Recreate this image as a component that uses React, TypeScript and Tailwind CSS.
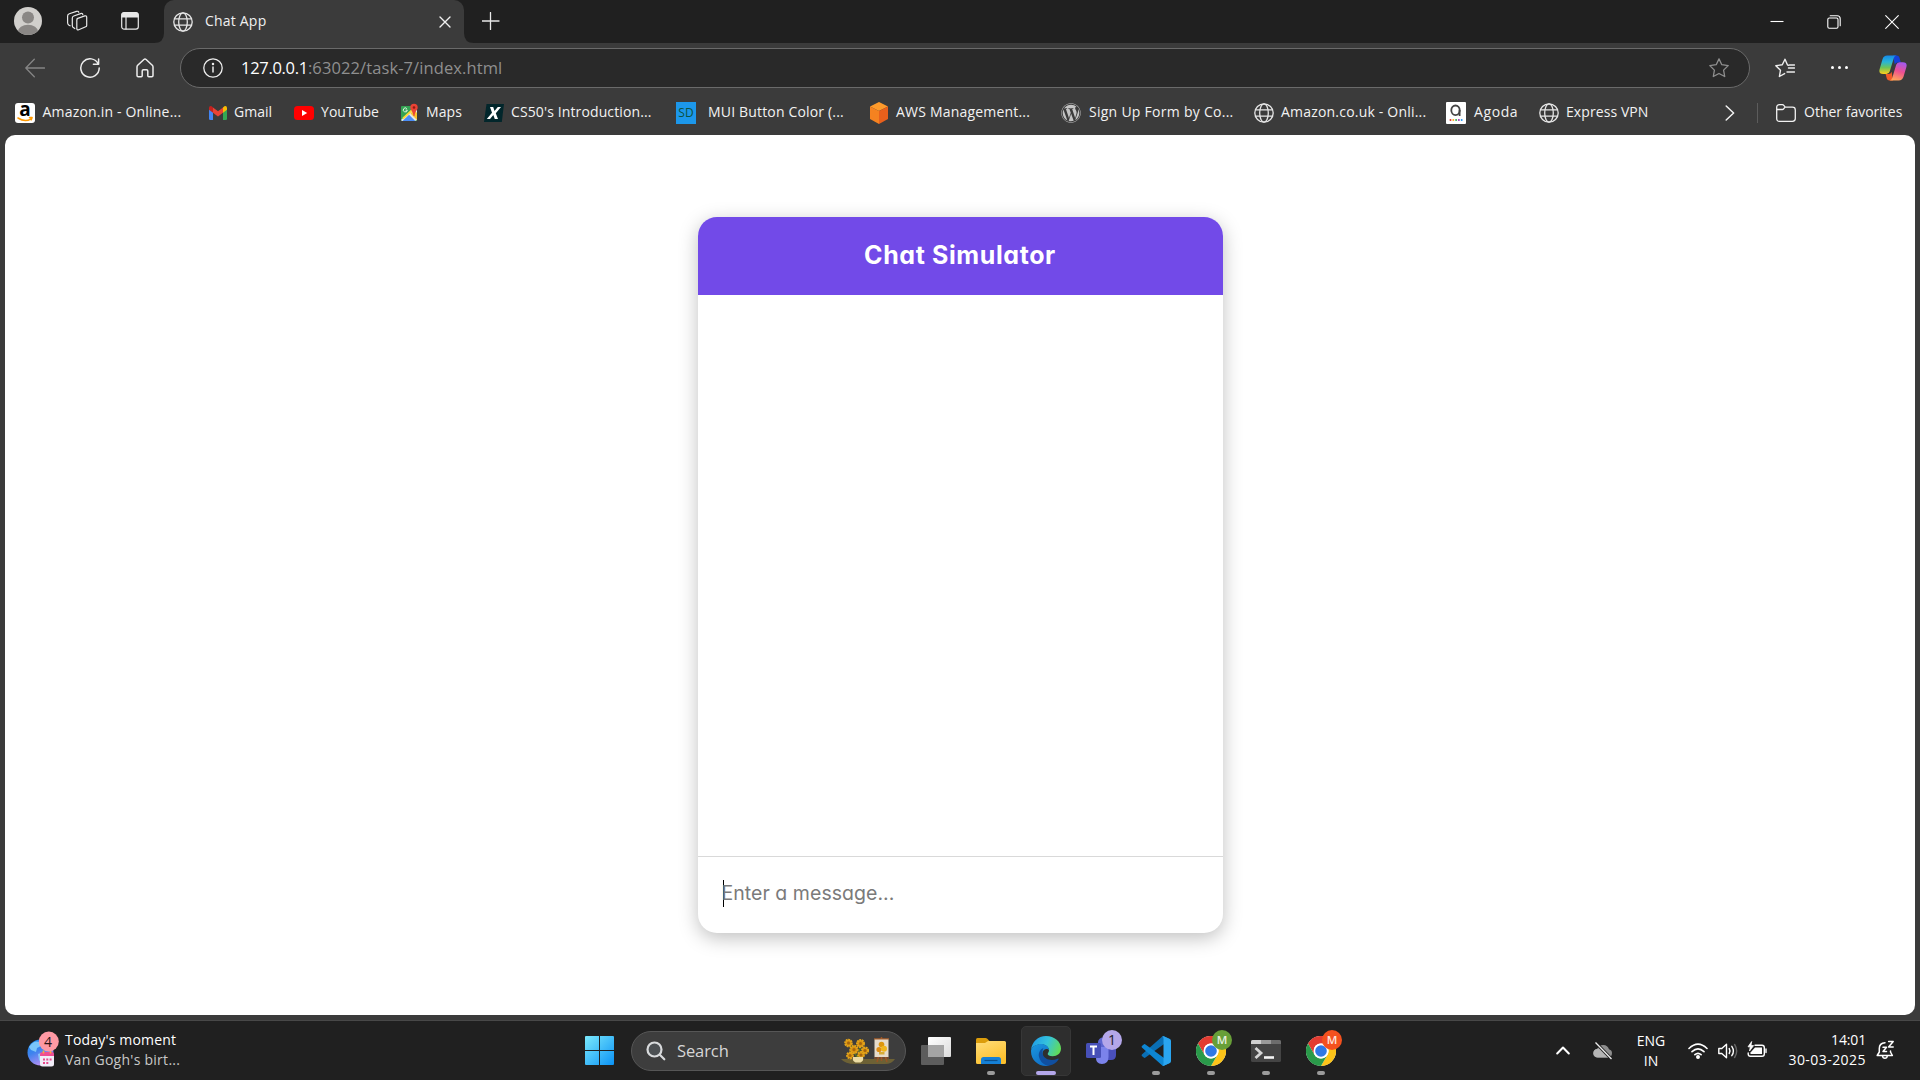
import type { ReactNode, SVGProps } from "react";
import { FaWordpress } from "react-icons/fa";

function Svg({ children, ...props }: SVGProps<SVGSVGElement>) {
  return (
    <svg fill="none" stroke="currentColor" strokeLinecap="round" strokeLinejoin="round" strokeWidth={1.3} {...props}>
      {children}
    </svg>
  );
}

function Globe() {
  return (
    <Svg viewBox="0 0 20 20" className="size-5 text-[#e6e6e6]">
      <circle cx="10" cy="10" r="9.2" />
      <ellipse cx="10" cy="10" rx="4.3" ry="9.2" />
      <path d="M1.5 6.8h17M1.5 13.2h17" />
    </Svg>
  );
}

/* ---------- tab strip ---------- */

function TabStrip() {
  return (
    <div className="flex h-[43px] bg-[#202020] text-[#e8e8e8]">
      <div className="flex w-[164px] items-center pb-px pl-[14px]">
        <svg viewBox="0 0 28 28" className="size-7">
          <clipPath id="avatar"><circle cx="14" cy="14" r="14" /></clipPath>
          <g clipPath="url(#avatar)">
            <rect width="28" height="28" fill="#d1cfcc" />
            <circle cx="14" cy="10.4" r="6" fill="#8a8785" />
            <ellipse cx="14" cy="24.5" rx="10" ry="6.8" fill="#8a8785" />
          </g>
        </svg>
        <Svg viewBox="0 0 22 22" className="ml-[24px] size-[22px]" strokeWidth={1.2}>
          <path d="M11.1 8.6 18.8 5.9q1.9-.5 1.9 1.3v8.2q0 1-1 1.4l-7 2.9q-1.9.7-1.9-1.2v-8.4q0-1.1.9-1.5Z" />
          <path d="M16.8 4.6q-.3-1.6-2.2-1L7.8 6q-1.5.5-1.5 2v7.5q0 1.300 1 2.100l1.500.9" />
          <path d="M12.8 2.300q-.5-1.500-2.300-.9L3.300 3.800q-1.700.6-1.700 2.200V12.700q0 1.400 1.100 2.200l1.400.9" />
        </Svg>
        <Svg viewBox="0 0 18 18" className="ml-[33px] size-[18px]" strokeWidth={1.2}>
          <rect x=".7" y=".9" width="16.6" height="16.2" rx="2.4" />
          <path d="M1 5V3q0-2.300 2.300-2.300h11.400Q17 .7 17 3v2Z" fill="currentColor" />
          <path d="M5 5v12" />
        </Svg>
      </div>
      <div className="relative flex w-[300px] items-center rounded-t-[10px] bg-[#3b3b3b] pl-[9px] text-[#f0f0f0]">
        <svg viewBox="0 0 10 10" className="absolute bottom-0 -left-[10px] size-[10px]"><path d="M10 0v10H0Q10 10 10 0Z" fill="#3b3b3b" /></svg>
        <svg viewBox="0 0 10 10" className="absolute -right-[10px] bottom-0 size-[10px]"><path d="M0 0v10h10Q0 10 0 0Z" fill="#3b3b3b" /></svg>
        <Globe />
        <span className="ml-3 flex-1 pb-[2px] text-[14px] leading-5 tracking-[0.2px]">Chat App</span>
        <Svg viewBox="0 0 10 10" className="mr-[14px] size-[10px] overflow-visible" strokeWidth={1.4}><path d="M0 0l10 10M10 0 0 10" /></Svg>
      </div>
      <Svg viewBox="0 0 18 18" className="mt-[12px] ml-[18px] size-[18px]" strokeWidth={1.3}><path d="M8.500.5v17M0 9h17" /></Svg>
      <div className="ml-auto flex items-center pr-[21px] text-white">
        <Svg viewBox="0 0 14 14" className="mr-[43px] size-[14px]" strokeWidth={1.1} strokeLinecap="butt"><path d="M.5 6.500h13" /></Svg>
        <Svg viewBox="0 0 14 14" className="mr-[44px] size-[14px]" strokeWidth={1.1}>
          <rect x=".8" y="3" width="10.2" height="10.2" rx="1.500" />
          <path d="M3.200.8h7q3 0 3 3v7" />
        </Svg>
        <Svg viewBox="0 0 14 14" className="size-[14px]" strokeWidth={1.1}><path d="M.7.700l12.600 12.600M13.300.7.7 13.300" /></Svg>
      </div>
    </div>
  );
}

/* ---------- toolbar ---------- */

const STAR = "M10 .9l2.800 5.800 6.400.9-4.600 4.500 1.100 6.400L10 15.500l-5.700 3 1.100-6.400L.8 7.600l6.400-.9Z";

function Copilot() {
  return (
    <svg viewBox="0 0 28 26" className="h-[26px] w-7">
      <defs>
        <linearGradient id="cpA" x1=".3" y1="0" x2=".3" y2="1">
          <stop offset="0" stopColor="#1589e8" /><stop offset=".35" stopColor="#28b5d8" />
          <stop offset=".65" stopColor="#6cc45a" /><stop offset="1" stopColor="#ffcf1a" />
        </linearGradient>
        <linearGradient id="cpB" x1=".7" y1="0" x2=".4" y2="1">
          <stop offset="0" stopColor="#a259f0" /><stop offset=".5" stopColor="#ee5090" /><stop offset="1" stopColor="#ffa45a" />
        </linearGradient>
      </defs>
      <path d="M14 .5h3.800q2 0 2.600 2l1.400 5h-3q-2.300 0-3 2.300Z" fill="#1440d8" />
      <path d="M14 25.500h-3.600q-2 0-2.600-2L6.600 19h3q2.300 0 3-2.300Z" fill="#f25a28" />
      <path d="M8.300.5h9.200q-2 .3-2.700 2.600l-4 13.200q-.8 2.700-3.400 2.700H4.100Q-.6 19 .6 14.300L3.500 4.200Q4.600.5 8.300.5Z" fill="url(#cpA)" />
      <path d="M19.700 25.500h-9.200q2-.3 2.700-2.600l4-13.100q.8-2.600 3.400-2.600h3.300q4.700 0 3.500 4.700l-2.900 9.900q-1.100 3.700-4.800 3.700Z" fill="url(#cpB)" />
    </svg>
  );
}

function Toolbar() {
  return (
    <div className="flex h-[49px] items-center text-[#ededed]">
      <div className="flex w-[180px] items-center pl-[25px]">
        <Svg viewBox="0 0 20 20" className="size-5 text-[#858585]"><path d="M19.500 10H.8M9.300 1.300.8 10l8.500 8.700" /></Svg>
        <Svg viewBox="0 0 20 20" className="ml-[35px] size-5" strokeWidth={1.5}>
          <path d="M18.300 6A9.200 9.200 0 1 0 19.200 10M18.600 1v5.200h-5.200" />
        </Svg>
        <Svg viewBox="0 0 18 20" className="ml-[36px] h-5 w-[18px]" strokeWidth={1.5}>
          <path d="M1 8.900Q1 8 1.700 7.300L7.900 1.500Q9 .6 10.100 1.500l6.200 5.800q.7.700.7 1.600v8.700q0 1.200-1.200 1.200h-3q-1 0-1-1V13q0-1.200-1.200-1.200H7.400Q6.200 11.800 6.200 13v4.800q0 1-1 1h-3Q1 18.800 1 17.600Z" />
        </Svg>
      </div>
      <div className="flex h-10 w-[1570px] items-center rounded-full border border-[#6a6a6a] bg-[#292929] pr-5 pl-[22px]">
        <Svg viewBox="0 0 20 20" className="size-5">
          <circle cx="10" cy="10" r="9.200" />
          <path d="M10 9v5" strokeWidth={1.5} /><circle cx="10" cy="6" r=".6" fill="currentColor" />
        </Svg>
        <div className="ml-[18px] flex-1 text-[16.5px] leading-6">
          <span className="tracking-[-0.3px] text-white">127.0.0.1</span>
          <span className="tracking-[0.1px] text-[#8f8f8f]">:63022/task-7/index.html</span>
        </div>
        <Svg viewBox="0 0 20 20" className="size-5 text-[#8f8f8f]"><path d={STAR} /></Svg>
      </div>
      <Svg viewBox="0 0 20 20" className="ml-[25px] size-5" strokeWidth={1.4}>
        <path d="M13.800 7.200l-1.300-.2L10 1.200 7.300 6.800l-6.500.9 4.700 4.500-1.100 6.300 5.200-2.900M13.500 10h6M12 14h7.500M14.500 7h5" />
      </Svg>
      <div className="ml-[36px] flex w-[17px] justify-between">
        <i className="size-[3px] rounded-full bg-white" /><i className="size-[3px] rounded-full bg-white" /><i className="size-[3px] rounded-full bg-white" />
      </div>
      <div className="ml-[31px]"><Copilot /></div>
    </div>
  );
}

/* ---------- bookmarks ---------- */

function Bookmark({ icon, label, className }: { icon: ReactNode; label: string; className: string }) {
  return (
    <div className={"flex shrink-0 items-center text-[14px] leading-5 whitespace-nowrap " + className}>
      <div className="flex size-5 shrink-0 items-center justify-center">{icon}</div>
      <span className="pb-[2px]">{label}</span>
    </div>
  );
}

const amazon = (
  <div className="relative flex size-5 justify-center rounded-[3px] bg-white">
    <span className="-mt-[4px] font-['Open_Sans'] text-[19px] leading-5 font-bold text-black">a</span>
    <Svg viewBox="0 0 20 6" className="absolute bottom-[1px] left-0 h-[6px] w-5 text-[#ff9900]" strokeWidth={1.5}><path d="M3 2q7 4.600 13 .8M14.500 1.600l2.600-.2-.8 2.400" /></Svg>
  </div>
);
const gmail = (
  <svg viewBox="0 0 18 14" className="h-[14px] w-[18px]">
    <path d="M0 2.500 4 5.500V14H1.300Q0 14 0 12.700Z" fill="#4285f4" />
    <path d="M18 2.500 14 5.500V14h2.700q1.300 0 1.300-1.300Z" fill="#34a853" />
    <path d="M4 1.500l5 3.800 5-3.800v5.200l-5 3.800-5-3.800Z" fill="#ea4335" />
    <path d="M0 2Q0 .2 1.700.1 2.500 0 3.200.7L4 1.400v5.300L0 3.700Z" fill="#c5221f" />
    <path d="M18 2q0-1.800-1.700-1.900-.8-.1-1.500.6l-.8.700v5.300l4-3Z" fill="#fbbc04" />
  </svg>
);
const youtube = (
  <svg viewBox="0 0 20 14" className="h-[14px] w-5">
    <rect width="20" height="14" rx="3.5" fill="#f00" /><path d="M8 4l5.200 3L8 10Z" fill="#fff" />
  </svg>
);
const maps = (
  <svg viewBox="0 0 20 20" className="size-5">
    <rect x="1" y="3" width="16" height="15" rx="1" fill="#34a353" />
    <path d="M1 17 16 3l1 1v13L15 18H2Z" fill="#e6e6e6" />
    <path d="M2.500 18 9 11.800l6.300 6.200Z" fill="#4a8cf5" />
    <path d="M10.500 10.500 17 17V10l-3-3.200Z" fill="#fbc02d" />
    <path d="M3 15.500 15.500 4" stroke="#fdd835" strokeWidth="1.8" />
    <path d="M6.800 5.600a2 2 0 1 0 .5 1.500H5.600" stroke="#e8f5e9" fill="none" />
    <path d="M14 .8a3.700 3.700 0 0 1 3.700 3.700c0 2.700-2.600 3.300-3.200 8.400h-1c-.6-5.100-3.200-5.700-3.200-8.400A3.700 3.700 0 0 1 14 .8Z" fill="#ea4335" />
    <circle cx="14" cy="4.5" r="1.3" fill="#8e1a12" />
  </svg>
);
const cs50 = (
  <svg viewBox="0 0 20 18" className="h-[18px] w-5">
    <path d="M2.500 0H20l-2.200 18H0Z" fill="#02262b" />
    <path d="M6 3h3.200l1.300 4L13.800 3H17l-5.200 6.200L14 15h-3.200l-1.500-4-3.300 4H2.800L8 8.800Z" fill="#fff" />
  </svg>
);
const sd = <div className="flex h-[22px] w-5 shrink-0 items-center justify-center bg-[#1c97ea] text-[12px] leading-5 tracking-[0.2px] text-[#0c5240]">SD</div>;
const aws = (
  <svg viewBox="0 0 20 22" className="h-[22px] w-5 shrink-0">
    <path d="M10 0l9 4.500L10 9 1 4.500Z" fill="#fd9a2b" />
    <path d="M1 4.500 10 9v13l-9-5Z" fill="#f58220" />
    <path d="M19 4.500 10 9v13l9-5Z" fill="#e8601c" />
  </svg>
);
const agoda = (
  <svg viewBox="0 0 20 22" className="h-[22px] w-5 shrink-0">
    <rect width="20" height="22" rx="1" fill="#fff" />
    <ellipse cx="9.5" cy="8.3" rx="4.2" ry="4.8" fill="none" stroke="#444" strokeWidth="1.8" />
    <path d="M13.600 8v6" stroke="#444" strokeWidth="1.8" />
    <circle cx="4.5" cy="18" r="1" fill="#e12d2d" /><circle cx="7.3" cy="18" r="1" fill="#fdae1a" />
    <circle cx="10.1" cy="18" r="1" fill="#35a853" /><circle cx="12.9" cy="18" r="1" fill="#9c33b5" /><circle cx="15.7" cy="18" r="1" fill="#2196f3" />
  </svg>
);

function Bookmarks() {
  return (
    <div className="flex h-[43px] items-center pb-px pl-[15px] text-[#f2f2f2]">
      <Bookmark icon={amazon} label="Amazon.in - Online..." className="w-[193px] gap-[7.5px] tracking-[0.19px]" />
      <Bookmark icon={gmail} label="Gmail" className="w-[86px] gap-[6px]" />
      <Bookmark icon={youtube} label="YouTube" className="w-[106px] gap-[7px] tracking-[0.06px]" />
      <Bookmark icon={maps} label="Maps" className="w-[84px] gap-[6px] tracking-[0.1px]" />
      <Bookmark icon={cs50} label="CS50's Introduction..." className="w-[192px] gap-[7px] tracking-[0.12px]" />
      <Bookmark icon={sd} label="MUI Button Color (..." className="w-[193px] gap-[12px] tracking-[0.17px]" />
      <Bookmark icon={aws} label="AWS Management..." className="w-[192px] gap-[7px] tracking-[0.2px]" />
      <Bookmark icon={<FaWordpress className="size-5 text-[#c4c4c4]" />} label="Sign Up Form by Co..." className="w-[193px] gap-2 tracking-[0.27px]" />
      <Bookmark icon={<Globe />} label="Amazon.co.uk - Onli..." className="w-[192px] gap-[7px] tracking-[0.2px]" />
      <Bookmark icon={agoda} label="Agoda" className="w-[93px] gap-2 tracking-[0.6px]" />
      <Bookmark icon={<Globe />} label="Express VPN" className="w-[186px] gap-[7px] tracking-[0.08px]" />
      <Svg viewBox="0 0 10 16" className="h-4 w-[10px]" strokeWidth={1.5}><path d="M1.200 1l7.400 7-7.400 7" /></Svg>
      <div className="ml-[22px] h-5 w-px bg-[#5c5c5c]" />
      <Bookmark
        icon={
          <Svg viewBox="0 0 20 18" className="h-[18px] w-5" strokeWidth={1.3}>
            <path d="M.7 3.500Q.7.700 3.500.7h2.800q1 0 1.700.9l1.200 1.500h7.300q2.800 0 2.800 2.800v8.600q0 2.800-2.800 2.800h-13Q.7 17.300.7 14.500ZM.8 5.500h5.400q1 0 1.600-.9l1.200-1.500" />
          </Svg>
        }
        label="Other favorites"
        className="ml-[18px] gap-2"
      />
    </div>
  );
}

/* ---------- chat page ---------- */

function ChatCard() {
  return (
    <div className="flex h-[716px] w-[525px] flex-col overflow-hidden rounded-[19px] bg-white font-['Inter',sans-serif] shadow-[0_5px_19px_rgba(0,0,0,0.25)] [font-feature-settings:'cv11']">
      <h1 className="flex h-[78px] items-center justify-center bg-[#724ae8] pb-[2px] text-[25px] leading-none font-bold tracking-[0.6px] text-white">Chat Simulator</h1>
      <div className="flex-1" />
      <div className="flex h-[77px] border-t border-[#d9d9d9] pt-[23px] pl-[25px] text-[#7a7a7a]">
        <div className="h-[27px] w-px bg-black" />
        <span className="-ml-[2px] text-[19.5px] leading-[27px] tracking-[0.04px]">Enter a message...</span>
      </div>
    </div>
  );
}

/* ---------- taskbar ---------- */

function Slot({ children, dot, active }: { children: ReactNode; dot?: boolean; active?: boolean }) {
  return (
    <div className={"relative flex size-[50px] items-center justify-center rounded-[5px] " + (active ? "border border-[#373737] bg-[#2e2e2e]" : "")}>
      {children}
      {dot && <i className="absolute bottom-px left-[21px] h-1 w-2 rounded-full bg-[#9b9b9b]" />}
      {active && <i className="absolute bottom-0 left-[14px] h-1 w-5 rounded-full bg-[#b4a7ea]" />}
    </div>
  );
}

function Chrome({ badge }: { badge: string }) {
  return (
    <div className="relative">
      <svg viewBox="0 0 30 30" className="size-[30px]">
        <circle cx="15" cy="15" r="15" fill="#fff" />
        <path d="M2 7.500A15 15 0 0 1 28 7.500H15A7.500 7.500 0 0 0 8.500 11.200L8.500 18.800Z" fill="#e23b30" />
        <path d="M28 7.500A15 15 0 0 1 15 30L21.500 18.800A7.500 7.500 0 0 0 15 7.500Z" fill="#fcc419" />
        <path d="M2 7.500 8.500 18.800A7.500 7.500 0 0 0 21.500 18.800L15 30A15 15 0 0 1 2 7.500Z" fill="#2a9a4a" />
        <circle cx="15" cy="15" r="7.500" fill="#fff" />
        <circle cx="15" cy="15" r="5.800" fill="#2f78e6" />
      </svg>
      <span className={"absolute -top-[6px] left-4 flex size-5 items-center justify-center rounded-full text-[11.500px] leading-none font-semibold text-white/85 " + badge}>M</span>
    </div>
  );
}

function Edge() {
  return (
    <svg viewBox="0 0 30 30" className="size-[30px]">
      <defs>
        <linearGradient id="eTop" x1="0" y1=".3" x2="1" y2=".6"><stop offset="0" stopColor="#1f9be8" /><stop offset=".5" stopColor="#35c3dc" /><stop offset="1" stopColor="#62dc55" /></linearGradient>
        <linearGradient id="eLeft" x1="0" y1="0" x2=".6" y2="1"><stop offset="0" stopColor="#1b98e0" /><stop offset="1" stopColor="#1070c8" /></linearGradient>
      </defs>
      <path d="M.1 14C.8 6 7 0 15 0c8.500 0 15 5.700 15 12.500 0 5-4 7.700-8.300 7.700-3.400 0-5-1.100-5-2.300 0-.9 1.300-1.600 1.300-3.600C18 11 14.500 8.300 10 8.300 5.500 8.300 1.500 10.500.1 14Z" fill="url(#eTop)" />
      <path d="M.1 14C1.500 10.200 5.500 8 10 8c4.200 0 8 2.400 8 6.200-1.500-2.400-6-1.400-6.500 2.700-.5 5.600 4 12.600 6.800 12.700C8 31.500-.8 24 .1 14Z" fill="url(#eLeft)" />
      <path d="M12.500 11.900C8.500 13.500 7 17.500 8.200 21.500 9.700 26.600 14 30 18.600 29.600c3.700-.8 6.800-2.800 8.900-6 .4-.8-.2-1.200-.9-.9-7 3-14.300.1-15.100-5.500-.3-2.400.4-3.800 1-5.300Z" fill="#104f9f" />
    </svg>
  );
}

const BLOOMS = [[7.5, 6, 3.2], [19.5, 6.500, 3.4], [13, 12.500, 3.6], [24, 13.500, 3], [9, 18.500, 2.8], [20, 18, 2.8]];

function Sunflowers() {
  return (
    <svg viewBox="0 0 56 28" className="h-7 w-14">
      <path d="M0 22h54q-3 5-10 5H14Q4 27 0 22Z" fill="#6d6135" />
      <path d="M8 6l8 14M20 7l-3 14M24 14l-7 7" stroke="#587525" strokeWidth="1.5" />
      {BLOOMS.map(([x, y, r]) => (
        <g key={x}>
          <circle cx={x} cy={y} r={r} fill="#d8900f" stroke="#e3a41a" strokeWidth="2.2" strokeDasharray="1.8 .6" />
          <circle cx={x} cy={y} r="1.5" fill="#a4650f" />
        </g>
      ))}
      <path d="M12 20h10q1 4-2.500 5.500h-5Q11 24 12 20Z" fill="#ecdca4" />
      <path d="M40.500 20v4M36 25l1.500-5M46 25l-1.500-5M40.500 0v3" stroke="#9a5425" strokeWidth="1.500" />
      <path d="M33.500 2h14v18h-14Z" fill="#e6dccb" /><path d="M33 1.800h15M33 21h15" stroke="#a55d2a" strokeWidth="1.2" />
      <circle cx="40.500" cy="7.500" r="2.800" fill="#dd970f" /><circle cx="38" cy="12.500" r="2.600" fill="#dd8d15" /><circle cx="43" cy="11.800" r="3" fill="#f0b61d" />
      <path d="M38 15h5.500v2.500H38Z" fill="#d7ac38" />
    </svg>
  );
}

function Taskbar() {
  return (
    <div className="flex h-[60px] items-center border-t border-[#484848] bg-[#202020] text-[14px] text-white">
      <div className="flex w-[575px] items-center pl-[27px]">
        <div className="relative -mt-[4px] flex h-9 w-[38px]">
          <svg viewBox="0 0 38 36" className="h-9 w-[38px]">
            <defs><linearGradient id="earth" x1="0" y1="0" x2=".5" y2="1"><stop offset="0" stopColor="#128df2" /><stop offset=".5" stopColor="#3f83ee" /><stop offset="1" stopColor="#b890f4" /></linearGradient></defs>
            <circle cx="13.500" cy="21.500" r="13" fill="url(#earth)" />
            <path d="M2 16q5-7 10-5l2 4-4 2-1 4-5-2ZM11 23l6-2 3 5-5 7-3-4Z" fill="#8dd6fb" opacity=".8" />
            <rect x="13" y="22" width="14" height="13.500" rx="2.500" fill="#f1edf8" />
            <path d="M13 25v-1.500Q13 21 15.500 21h9Q27 21 27 23.500V25Z" fill="#ef4c94" />
            <path d="M16.500 19.500v3M23.500 19.500v3" stroke="#f7a93b" strokeWidth="1.600" />
            <path d="M16 28.500h2M19.300 28.500h2M22.600 28.500h2M16 32h2M19.300 32h2" stroke="#e8498c" strokeWidth="2" />
            <circle cx="21.800" cy="10.500" r="10" fill="#ff99a4" />
          </svg>
          <span className="absolute top-0 left-[17px] text-[14px] leading-[21px] text-[#2b1417]">4</span>
        </div>
        <div className="pb-[2px] leading-5">
          <div className="tracking-[0.18px]">Today's moment</div>
          <div className="tracking-[0.27px] text-[#c8c8c8]">Van Gogh's birt...</div>
        </div>
      </div>

      <div className="-ml-px flex items-center gap-[5px]">
        <Slot>
          <svg viewBox="0 0 29 29" className="size-[29px]">
            <defs><linearGradient id="win" gradientUnits="userSpaceOnUse" x1="0" y1="0" x2="29" y2="29"><stop stopColor="#7be9fc" /><stop offset="1" stopColor="#0b92f5" /></linearGradient></defs>
            <path d="M0 1q0-1 1-1h13v14H0ZM15 0h13q1 0 1 1v13H15ZM0 15h14v14H1q-1 0-1-1ZM15 15h14v13q0 1-1 1H15Z" fill="url(#win)" />
          </svg>
        </Slot>
        <div className="ml-[2px] flex h-10 w-[275px] items-center rounded-full border border-[#565656] bg-[#3d3d3d] pr-[8px] pl-[14px]">
          <Svg viewBox="0 0 20 20" className="size-5 text-[#d8dadc]" strokeWidth={2.2}>
            <circle cx="8.500" cy="8.500" r="7" fill="#4c5053" /><path d="M13.800 13.800l4.500 4.500" />
          </Svg>
          <span className="ml-[11px] flex-1 text-[16.5px] leading-6 tracking-[-0.1px] text-[#d6d6d6]">Search</span>
          <Sunflowers />
        </div>
        <Slot>
          <svg viewBox="0 0 30 28" className="h-7 w-[30px]">
            <defs><linearGradient id="tv" x1="0" y1="0" x2="1" y2="1"><stop stopColor="#fff" /><stop offset="1" stopColor="#dcdcdc" /></linearGradient></defs>
            <rect x="7" width="23" height="20" rx="1" fill="url(#tv)" />
            <rect y="8" width="23" height="20" rx="1" fill="#5d5d5d" /><path d="M7 8h16v12H7Z" fill="#a4a4a4" />
          </svg>
        </Slot>
        <Slot dot>
          <svg viewBox="0 0 30 26" className="h-[26px] w-[30px]">
            <defs><linearGradient id="fold" x1="0" y1="0" x2=".5" y2="1"><stop stopColor="#ffdd7a" /><stop offset="1" stopColor="#fcc02d" /></linearGradient></defs>
            <path d="M0 1.500Q0 0 1.500 0h8q1 0 1.800.8L14 3.500V8H0Z" fill="#dc9d0b" />
            <path d="M0 5h9l3-2h16.500Q30 3 30 4.500v20q0 1.500-1.500 1.500h-27Q0 26 0 24.500Z" fill="url(#fold)" />
            <path d="M5 26v-4.500Q5 19 7.500 19h15q2.500 0 2.500 2.500V26Z" fill="#1580d6" /><path d="M8.500 22.500h13" stroke="#0b4f8c" strokeWidth="1.200" />
          </svg>
        </Slot>
        <Slot active><Edge /></Slot>
        <Slot>
          <div className="relative flex">
            <svg viewBox="0 0 30 30" className="size-[30px]">
              <circle cx="17" cy="6.500" r="5" fill="#5c65d0" />
              <path d="M20 11h9q1 0 1 1v7q0 5-5 5h-5Z" fill="#4a50bd" />
              <path d="M10 11h12.500v10q0 7-6.500 7t-6-7Z" fill="#7b83eb" />
              <rect y="7" width="15" height="15" rx="1.500" fill="#4750b8" />
              <path d="M4 10.500h7M7.500 10.500v8.500" stroke="#fff" strokeWidth="2" />
            </svg>
            <span className="absolute -top-[6px] left-4 flex size-5 items-center justify-center rounded-full bg-[#b4a7ea] text-[14px] leading-none text-[#1e1b2a]">1</span>
          </div>
        </Slot>
        <Slot dot>
          <svg viewBox="0 0 100 100" className="size-[30px]">
            <path d="M96 10 76 1q-4-1-7 2L3 62q-2 3 0 5l6 5q3 2 6 0L94 14q6-3 6 3Z" fill="#0a6fb5" />
            <path d="M96 90 76 99q-4 1-7-2L3 38q-2-3 0-5l6-5q3-2 6 0L94 86q6 3 6-3Z" fill="#0d86d3" />
            <path d="M76 99q-4 1-7-2 5 3 6-4V8q0-8-6-5 3-3 7-2l20 9q4 2 4 7v66q0 5-4 7Z" fill="#2aa5f0" />
          </svg>
        </Slot>
        <Slot dot><Chrome badge="bg-[#689f38]" /></Slot>
        <Slot dot>
          <svg viewBox="0 0 30 22" className="h-[22px] w-[30px]">
            <rect width="30" height="22" rx="1.500" fill="#444" />
            <path d="M0 4V1.500Q0 0 1.500 0H10v4Z" fill="#cfcfcf" /><path d="M10 0h10v4H10Z" fill="#9a9a9a" /><path d="M20 0h8.500Q30 0 30 1.500V4H20Z" fill="#6d6d6d" />
            <path d="M4.500 8l5.500 5-5.500 5" fill="none" stroke="#d5d5d5" strokeWidth="2.800" /><path d="M13 17.500h10" stroke="#f4f4f4" strokeWidth="2.600" />
          </svg>
        </Slot>
        <Slot dot><Chrome badge="bg-[#f4511e]" /></Slot>
      </div>

      <div className="ml-auto flex items-center pr-[24px]">
        <Svg viewBox="0 0 14 9" className="h-[9px] w-[14px]" strokeWidth={2}><path d="M1.200 7.500 7 1.500l5.800 6" /></Svg>
        <svg viewBox="0 0 20 18" className="ml-[23px] h-[18px] w-5">
          <path d="M5 15.500a4.400 4.400 0 0 1-.6-8.800A6.200 6.200 0 0 1 16 7.300a4.200 4.200 0 0 1-.8 8.200Z" fill="#8d8d8d" />
          <path d="M5 15.500a4.400 4.400 0 0 1-.6-8.800Q8 6 11 9.500l6 5q-1 1-2 1Z" fill="#b5b5b5" />
          <path d="M2.500.5 18.500 17" stroke="#202020" strokeWidth="3.200" /><path d="M2.500.5 18.500 17" stroke="#eee" strokeWidth="1.300" />
        </svg>
        <div className="ml-[23px] w-[30px] text-center leading-5">
          <div>ENG</div><div>IN</div>
        </div>
        <Svg viewBox="0 0 20 16" className="ml-[22px] h-4 w-5" strokeWidth={1.6}>
          <path d="M1 5.500Q10-3.200 19 5.500M4 8.700q6-5.600 12 0M6.900 11.700q3.100-2.700 6.200 0" /><circle cx="10" cy="14" r="1.200" fill="currentColor" />
        </Svg>
        <Svg viewBox="0 0 20 16" className="ml-[10px] h-4 w-5" strokeWidth={1.4}>
          <path d="M.8 5.500h3L8.500 1.300v13.400L3.800 10.500h-3ZM11.200 5.500q1.600 2.500 0 5M13.800 3.300q3.200 4.700 0 9.400" /><path d="M16.600 1.500q4.200 6.500 0 13" stroke="#666" />
        </Svg>
        <Svg viewBox="0 0 20 18" className="mb-[2px] ml-[9px] h-[18px] w-5" strokeWidth={1.4}>
          <path d="M8 4.200h7q2.300 0 2.300 2.300v6.500q0 2.300-2.300 2.300H3.500q-2.300 0-2.300-2.300v-1M19 8v3.500" />
          <path d="M8 6.500h7v6.600H3.500V11.500Z" fill="currentColor" stroke="none" />
          <path d="M4.500.8 1 5.800h2.300L2.500 10 6.600 4.600H4.200Z" fill="currentColor" strokeWidth=".8" />
        </Svg>
        <div className="w-[99px] pb-[2px] text-right leading-5 whitespace-nowrap">
          <div className="tracking-[-0.15px]">14:01</div><div className="tracking-[0.45px]">30-03-2025</div>
        </div>
        <Svg viewBox="0 0 20 20" className="mb-[2px] ml-[10px] size-5" strokeWidth={1.5}>
          <path d="M9 2.800C5.500 3 3.300 5.300 3.300 8.500V12L1.200 15.500h15.200L14.500 12v-1M6.500 16q.3 2.300 2.400 2.300t2.400-2.300" />
          <path d="M7 7.200h3.500L7 11.500h3.500M12.600 1.500h4.600l-4.600 5.500h4.600" />
        </Svg>
      </div>
    </div>
  );
}

export default function App() {
  return (
    <div className="flex h-[1080px] w-[1920px] flex-col overflow-hidden bg-[#3b3b3b] font-['Open_Sans','Noto_Sans',sans-serif]">
      <TabStrip />
      <Toolbar />
      <Bookmarks />
      <main className="mx-[5px] mb-[5px] flex flex-1 justify-center rounded-[10px] bg-white pt-[82px]">
        <ChatCard />
      </main>
      <Taskbar />
    </div>
  );
}
